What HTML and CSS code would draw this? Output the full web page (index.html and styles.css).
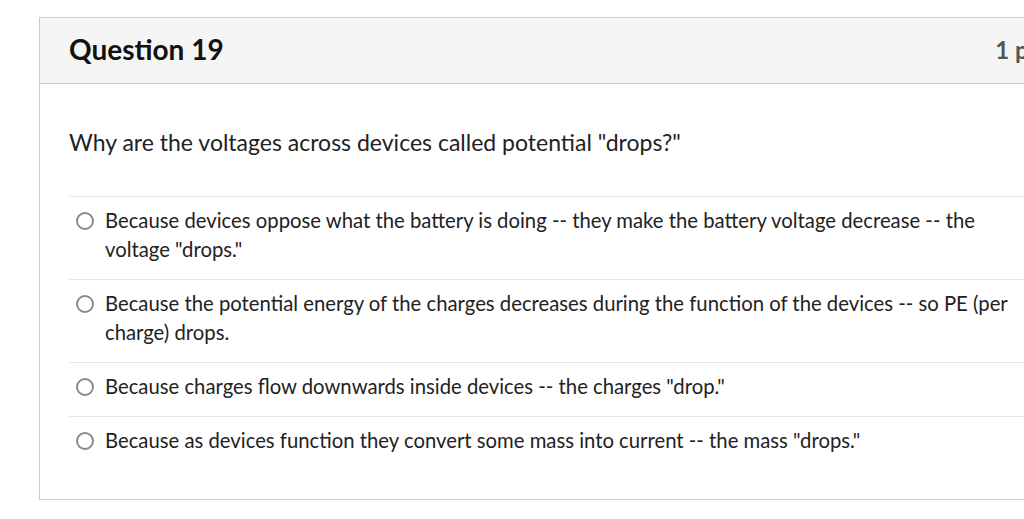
FILE: index.html
```html
<!DOCTYPE html>
<html>
<head>
<meta charset="utf-8">
<link rel="stylesheet" href="styles.css">
</head>
<body>
<div class="card">
  <div class="header">
    <h2 class="title">Question 19</h2>
    <span class="points">1 pts</span>
  </div>
  <div class="content">
    <p class="question">Why are the voltages across devices called potential "drops?"</p>
    <div class="answers">
      <label class="answer"><span class="radio"></span><span class="text">Because devices oppose what the battery is doing -- they make the battery voltage decrease -- the voltage "drops."</span></label>
      <label class="answer"><span class="radio"></span><span class="text">Because the potential energy of the charges decreases during the function of the devices -- so PE (per charge) drops.</span></label>
      <label class="answer"><span class="radio"></span><span class="text">Because charges flow downwards inside devices -- the charges "drop."</span></label>
      <label class="answer"><span class="radio"></span><span class="text">Because as devices function they convert some mass into current -- the mass "drops."</span></label>
    </div>
  </div>
</div>
</body>
</html>
```

FILE: styles.css
```css
html, body {
  margin: 0;
  padding: 0;
  background: #fff;
  overflow: hidden;
}
body {
  padding: 17px 0 0 39px;
  font-family: Lato, "Open Sans", sans-serif;
  color: #222;
}
.card {
  width: 1030px;
  border: 1px solid #c7cdd1;
  box-sizing: border-box;
}
.header {
  height: 66px;
  box-sizing: border-box;
  background: #f5f5f5;
  border-bottom: 1px solid #c7cdd1;
  display: flex;
  align-items: center;
  justify-content: space-between;
  padding: 0 20px 3px 29px;
}
.title {
  margin: 0;
  font-size: 28px;
  font-weight: 700;
  color: #111;
}
.points {
  font-size: 24px;
  font-weight: 700;
  color: #555;
}
.content {
  padding: 42px 30px 29px 29px;
}
.question {
  margin: 0 0 38px;
  font-size: 23px;
  line-height: 32px;
  color: #222;
}
.answers {
  display: flex;
  flex-direction: column;
}
.answer {
  display: flex;
  align-items: flex-start;
  border-top: 1px solid #e8e8e8;
  padding: 9px 0 15px 0;
  font-size: 20.3px;
  line-height: 29px;
}
.radio {
  flex: none;
  width: 14px;
  height: 14px;
  border: 2px solid #8a8a8a;
  border-radius: 50%;
  margin: 6px 11px 0 7px;
}
.text {
  flex: 1;
}
```
